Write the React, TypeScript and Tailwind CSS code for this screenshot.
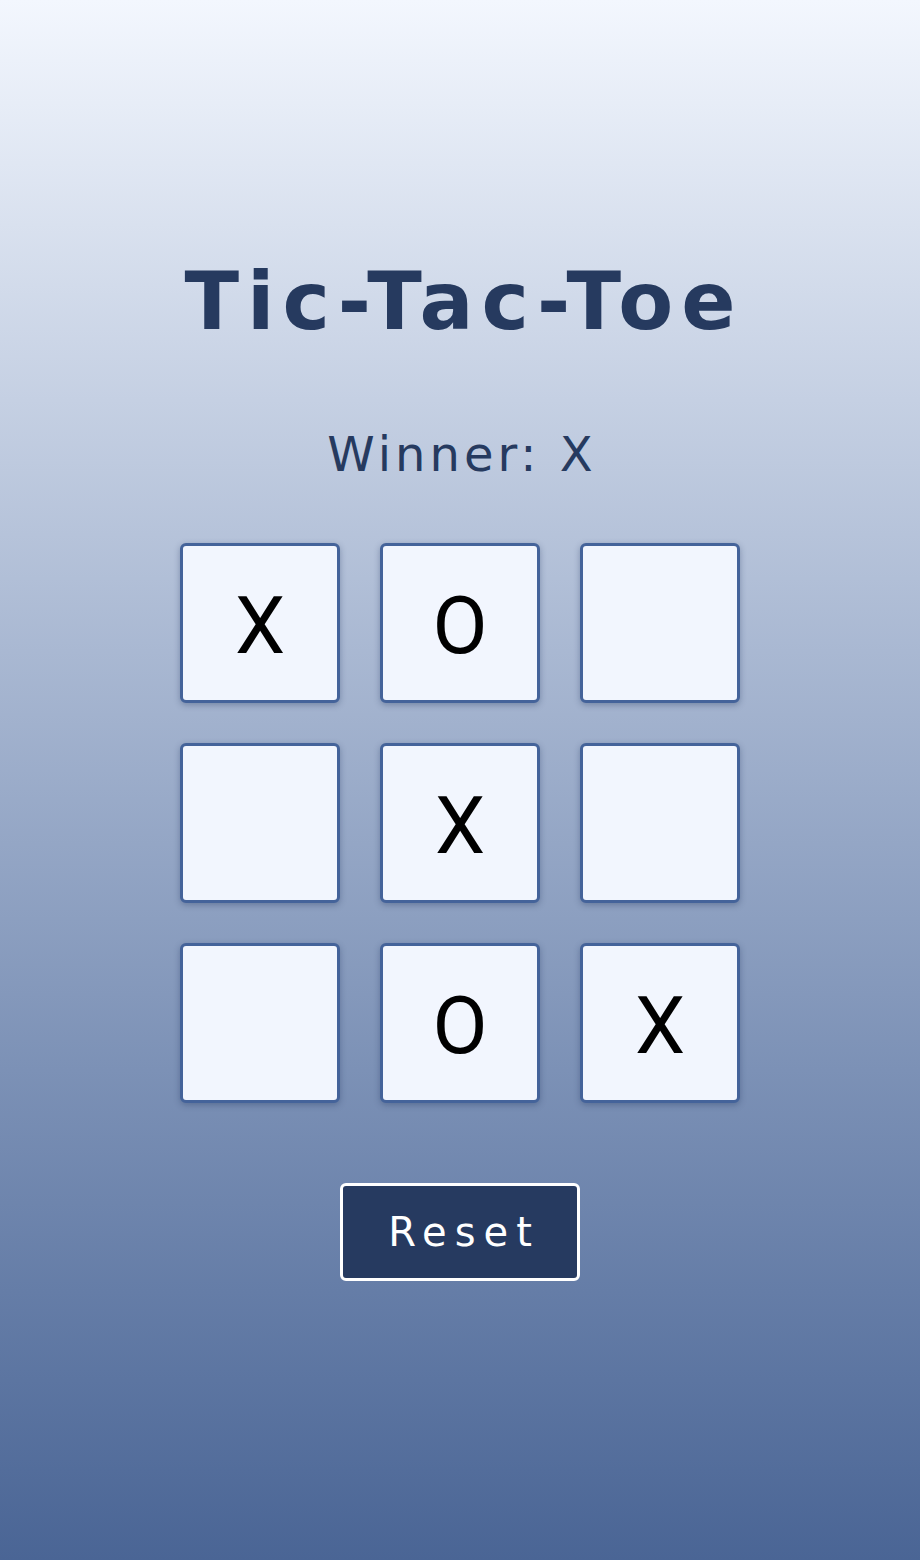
import React from "react";

const board = ["X", "O", "", "", "X", "", "", "O", "X"];

export default function App() {
  return (
    <div className="min-h-[1560px] w-full bg-gradient-to-b from-[#f3f7fe] to-[#4a6595] flex flex-col items-center pt-[262px] font-['DejaVu_Sans',sans-serif]">
      <h1 className="text-[80px] leading-none font-bold text-[#263a5f] tracking-[8px] pl-[8px]">
        Tic-Tac-Toe
      </h1>
      <div className="mt-[88px] text-[48px] leading-none text-[#263a5f] tracking-[4px] pl-[4px]">
        Winner: X
      </div>
      <div className="mt-[65px] grid grid-cols-[160px_160px_160px] gap-[40px]">
        {board.map((v, i) => (
          <button
            key={i}
            className="w-[160px] h-[160px] rounded-[6px] border-[3px] border-[#44639a] bg-[#f2f6fe] shadow-[0_2px_6px_rgba(30,50,90,0.35)] flex items-center justify-center pt-[6px] text-[80px] leading-none text-black font-['Roboto',sans-serif]"
          >
            {v}
          </button>
        ))}
      </div>
      <button className="mt-[80px] w-[240px] h-[98px] rounded-[6px] border-[3px] border-white bg-[#263a60] text-white text-[40px] leading-none tracking-[8px] pl-[8px] flex items-center justify-center">
        Reset
      </button>
    </div>
  );
}
